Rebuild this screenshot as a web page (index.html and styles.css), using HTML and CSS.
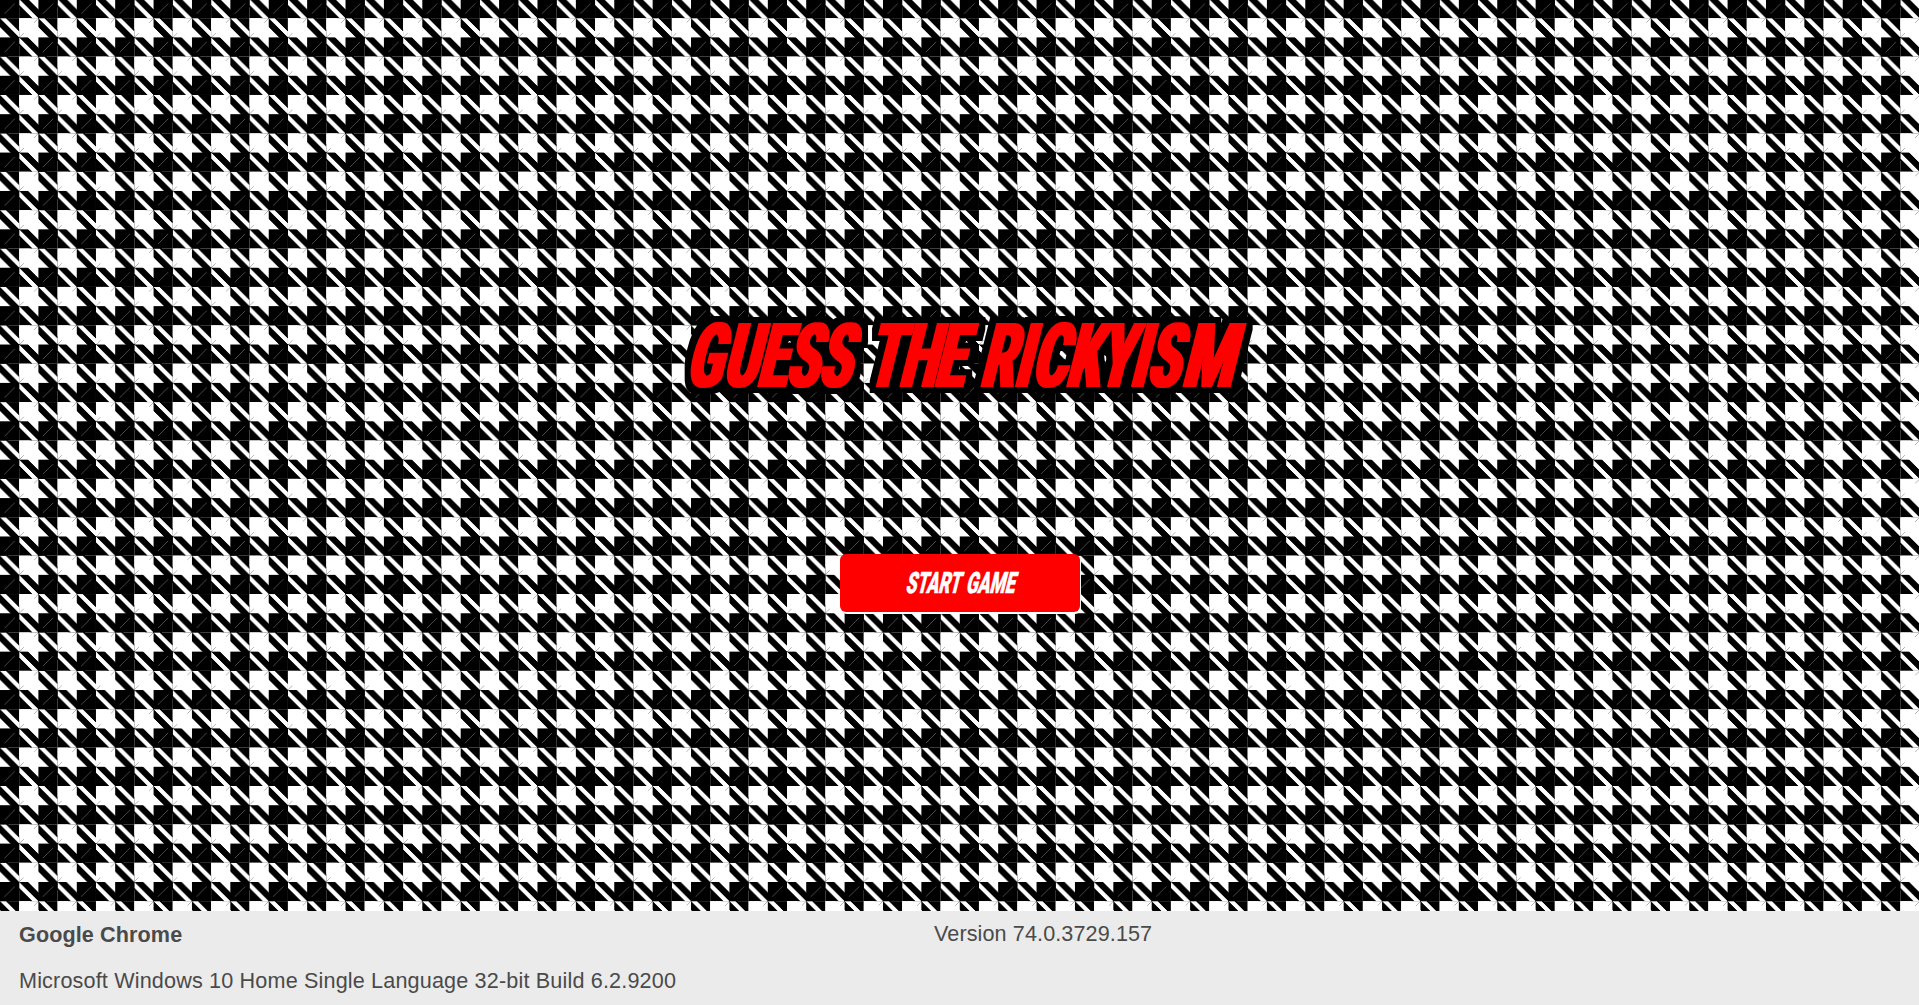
FILE: index.html
```html
<!DOCTYPE html>
<html lang="en">
<head>
<meta charset="utf-8">
<title>Guess the Rickyism</title>
<link rel="stylesheet" href="styles.css">
</head>
<body>
<main class="game">
  <h1 class="title">
    <svg class="title-art" viewBox="670 300 600 110" width="600" height="110">
      <filter id="outline" filterUnits="userSpaceOnUse" x="670" y="300" width="600" height="110" color-interpolation-filters="sRGB">
        <feMorphology in="SourceGraphic" operator="dilate" radius="2 0" result="fat"/>
        <feMorphology in="fat" operator="dilate" radius="6 6" result="wide"/>
        <feFlood flood-color="#000"/>
        <feComposite in2="wide" operator="in" result="edge"/>
        <feMerge><feMergeNode in="edge"/><feMergeNode in="fat"/></feMerge>
      </filter>
      <g filter="url(#outline)">
        <g transform="translate(-1 387) skewX(-14) scale(.57 1)">
          <text class="title-text" y="0" x="1204 1268.4 1328.6 1379 1436 1496.5 1521 1578 1639.6 1691 1720.4 1780 1810.5 1870.7 1926.8 1983.5 2012.3 2074">GUESS THE RICKYIS<tspan textLength="89" lengthAdjust="spacingAndGlyphs">M</tspan></text>
        </g>
      </g>
    </svg>
  </h1>
  <button class="start" type="button">
    <svg class="start-art" viewBox="840 554 240 58" width="240" height="58">
      <g transform="translate(0 593) skewX(-14)">
        <text class="start-text" x="905" y="0" textLength="109" lengthAdjust="spacingAndGlyphs">START GAME</text>
      </g>
    </svg>
  </button>
</main>
<footer class="info">
  <strong class="browser">Google Chrome</strong>
  <span class="version">Version 74.0.3729.157</span>
  <span class="system">Microsoft Windows 10 Home Single Language 32-bit Build 6.2.9200</span>
</footer>
</body>
</html>
```
FILE: styles.css
```css
body {
  margin: 0;
  height: 1005px;
  display: flex;
  flex-direction: column;
  overflow: hidden;
  font-family: "Liberation Sans", Arial, sans-serif;
}

.game {
  font-size: 19.2px;
  height: 911px;
  box-sizing: border-box;
  padding-top: 300px;
  display: flex;
  flex-direction: column;
  align-items: center;
  background:
    linear-gradient(-45deg, white 25%, transparent 25%, transparent 75%, black 75%, black) 0 -1px,
    linear-gradient(-45deg, black 25%, transparent 25%, transparent 75%, white 75%, white) 1em calc(1em - 1px),
    linear-gradient(45deg, black 17%, transparent 17%, transparent 25%, black 25%, black 36%, transparent 36%, transparent 64%, black 64%, black 75%, transparent 75%, transparent 83%, black 83%) 1em calc(1em - 1px);
  background-color: white;
  background-size: 2em 2em;
}

.title {
  margin: 0 0 144px 21px;
  height: 110px;
  font-size: 16px;
}

.title-art,
.start-art {
  display: block;
  overflow: visible;
}

.title-text {
  font: 900 90px Roboto, sans-serif;
  fill: #f00;
}

.start {
  width: 240px;
  height: 58px;
  padding: 0;
  border: 0;
  border-radius: 6px;
  background: #f00;
  box-shadow: 1px 2px 0 #fff;
}

.start-text {
  font: 900 29.5px Roboto, sans-serif;
  word-spacing: 3px;
  fill: #fff;
  stroke: #fff;
  stroke-width: .6px;
}

.info {
  flex: 1;
  display: grid;
  grid-template-columns: 915px 1fr;
  grid-template-rows: 47px 30px;
  padding: 9px 0 0 19px;
  background: #ebebeb;
  color: #4a4a4a;
  font-size: 21.6px;
  line-height: 27px;
  letter-spacing: .1px;
}

.browser {
  padding-top: 1px;
}

.system {
  letter-spacing: .16px;
}
```
